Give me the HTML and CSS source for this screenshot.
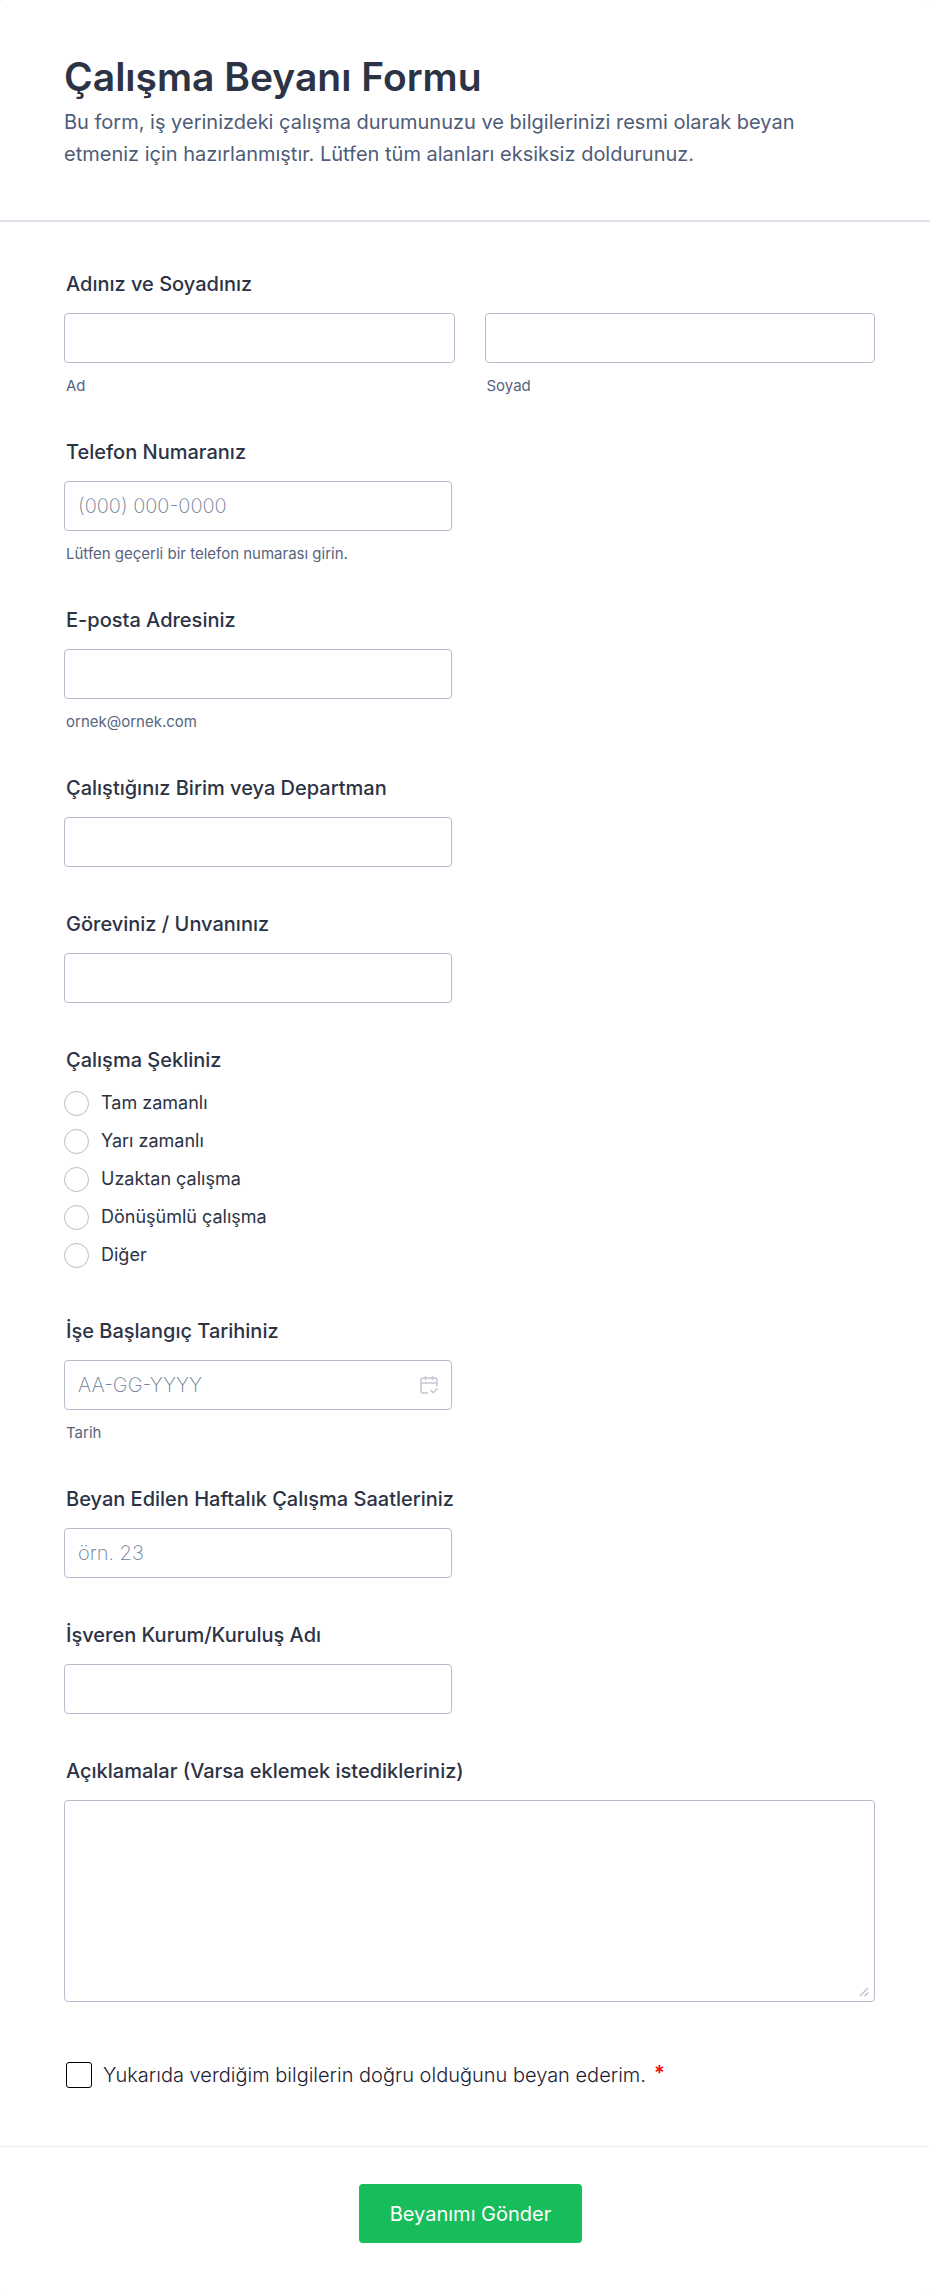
FILE: index.html
```html
<!DOCTYPE html>
<html lang="tr">

<head>
    <meta charset="UTF-8">
    <meta name="viewport" content="width=device-width, initial-scale=1.0">
    <title>Çalışma Beyanı Formu</title>
    <link rel="stylesheet" href="styles.css">
</head>

<body>
    <form class="form-card">
        <header class="form-header">
            <h1>Çalışma Beyanı Formu</h1>
            <p>Bu form, iş yerinizdeki çalışma durumunuzu ve bilgilerinizi resmi olarak beyan etmeniz için hazırlanmıştır. Lütfen tüm alanları eksiksiz doldurunuz.</p>
        </header>

        <div class="form-body">
            <fieldset class="field">
                <legend class="field-label">Adınız ve Soyadınız</legend>
                <div class="name-row">
                    <div>
                        <input type="text" id="firstName" class="text-input" />
                        <label for="firstName" class="sub-label">Ad</label>
                    </div>
                    <div>
                        <input type="text" id="lastName" class="text-input" />
                        <label for="lastName" class="sub-label">Soyad</label>
                    </div>
                </div>
            </fieldset>

            <div class="field">
                <label for="phone" class="field-label">Telefon Numaranız</label>
                <input type="tel" id="phone" class="text-input half" placeholder="(000) 000-0000" />
                <span class="sub-label">Lütfen geçerli bir telefon numarası girin.</span>
            </div>

            <div class="field">
                <label for="email" class="field-label">E-posta Adresiniz</label>
                <input type="email" id="email" class="text-input half" />
                <span class="sub-label">ornek@ornek.com</span>
            </div>

            <div class="field">
                <label for="department" class="field-label">Çalıştığınız Birim veya Departman</label>
                <input type="text" id="department" class="text-input half" />
            </div>

            <div class="field">
                <label for="jobTitle" class="field-label">Göreviniz / Unvanınız</label>
                <input type="text" id="jobTitle" class="text-input half" />
            </div>

            <fieldset class="field">
                <legend class="field-label">Çalışma Şekliniz</legend>
                <div class="radio-list">
                    <label class="radio-item"><input type="radio" name="workType" value="full" />Tam zamanlı</label>
                    <label class="radio-item"><input type="radio" name="workType" value="part" />Yarı zamanlı</label>
                    <label class="radio-item"><input type="radio" name="workType" value="remote" />Uzaktan çalışma</label>
                    <label class="radio-item"><input type="radio" name="workType" value="shift" />Dönüşümlü çalışma</label>
                    <label class="radio-item"><input type="radio" name="workType" value="other" />Diğer</label>
                </div>
            </fieldset>

            <div class="field">
                <label for="startDate" class="field-label">İşe Başlangıç Tarihiniz</label>
                <div class="date-box half">
                    <input type="text" id="startDate" class="text-input" placeholder="AA-GG-YYYY" />
                    <svg class="date-icon" viewBox="0 0 18 18" width="18" height="18" fill="none" stroke="currentColor" stroke-width="1.5" stroke-linecap="round" stroke-linejoin="round" aria-hidden="true">
                        <path d="M7.5 17H3a2 2 0 0 1-2-2V4a2 2 0 0 1 2-2h12a2 2 0 0 1 2 2v6" />
                        <path d="M1 7h16M5.5.8v3M12.5.8v3M11 14.5l2.2 2.2 3.8-3.9" />
                    </svg>
                </div>
                <span class="sub-label">Tarih</span>
            </div>

            <div class="field">
                <label for="hours" class="field-label">Beyan Edilen Haftalık Çalışma Saatleriniz</label>
                <input type="text" id="hours" class="text-input half" placeholder="örn. 23" />
            </div>

            <div class="field">
                <label for="employer" class="field-label">İşveren Kurum/Kuruluş Adı</label>
                <input type="text" id="employer" class="text-input half" />
            </div>

            <div class="field">
                <label for="notes" class="field-label">Açıklamalar (Varsa eklemek istedikleriniz)</label>
                <div class="notes-box">
                    <textarea id="notes" class="text-area"></textarea>
                    <svg class="resize-grip" viewBox="0 0 10 10" width="10" height="10" fill="none" stroke="currentColor" stroke-width="1.3" aria-hidden="true">
                        <path d="M1 9l8-8M5.5 9L9 5.5" />
                    </svg>
                </div>
            </div>

            <label class="terms"><input type="checkbox" id="terms" required /><span>Yukarıda verdiğim bilgilerin doğru olduğunu beyan ederim.</span><span class="required">*</span></label>
        </div>

        <footer class="form-footer">
            <button type="submit" class="submit-button">Beyanımı Gönder</button>
        </footer>
    </form>
</body>

</html>
```
FILE: styles.css
```css
* {
    box-sizing: border-box;
}

body {
    margin: 0;
    background-color: #f3f3fe;
    font-family: Inter, "Noto Sans", sans-serif;
    color: #2c3345;
}

.form-card {
    background-color: #fff;
    border-radius: 4px;
}

.form-header {
    padding: 53px 64px 50px;
    border-bottom: 2px solid #dfe0ea;
}

.form-header h1 {
    margin: 0;
    font-size: 39px;
    font-weight: 600;
    line-height: 48px;
}

.form-header p {
    max-width: 780px;
    margin: 5px 0 0;
    font-size: 20px;
    line-height: 32px;
    color: #4f5c78;
}

.form-body {
    padding: 49px 55px 58px 64px;
    border-bottom: 1px solid #eceef3;
}

.field {
    margin: 0 0 44px;
    padding: 0;
    border: none;
}

.field-label {
    display: block;
    margin-bottom: 16px;
    padding: 0 2px;
    font-size: 20px;
    font-weight: 500;
    line-height: 26px;
}

.name-row {
    display: grid;
    grid-template-columns: 1fr 1fr;
    gap: 30px;
}

.text-input,
.text-area {
    display: block;
    width: 100%;
    border: 1px solid #b8bdcd;
    border-radius: 4px;
    background-color: #fff;
    font-family: inherit;
    font-size: 20px;
    color: #2c3345;
}

.text-input {
    height: 50px;
    padding: 0 13px;
}

.half {
    width: 100%;
    max-width: 388px;
}

.text-input::placeholder {
    color: #6a7c94;
    font-weight: 200;
    opacity: 1;
}

.text-input:focus,
.text-area:focus {
    border-color: #2e69ff;
    outline: none;
}

.sub-label {
    display: block;
    margin-top: 14px;
    padding: 0 2px;
    font-size: 15px;
    line-height: 18px;
    color: #57647e;
}

.radio-list {
    display: flex;
    flex-direction: column;
    gap: 12px;
    padding: 1px 0 6px;
}

.radio-item {
    display: flex;
    align-items: center;
    gap: 12px;
    font-size: 18px;
    line-height: 26px;
}

.radio-item input {
    appearance: none;
    width: 25px;
    height: 25px;
    margin: 0;
    border: 1px solid #b8bdcd;
    border-radius: 50%;
    background-color: #fff;
}

.radio-item input:checked {
    border: 7px solid #2e69ff;
}

.date-box,
.notes-box {
    position: relative;
}

.date-icon {
    position: absolute;
    top: 16px;
    right: 14px;
    color: #c3c8d6;
}

.text-area {
    height: 202px;
    padding: 13px;
    resize: none;
}

.resize-grip {
    position: absolute;
    right: 6px;
    bottom: 5px;
    color: #b8bdcd;
}

.terms {
    display: flex;
    align-items: center;
    margin-top: 60px;
    padding-left: 2px;
    font-size: 20px;
    font-weight: 300;
    line-height: 26px;
    color: #1c2233;
}

.terms input {
    appearance: none;
    width: 26px;
    height: 26px;
    margin: 0 11px 0 0;
    border: 1px solid #000;
    border-radius: 3px;
}

.terms input:checked {
    background-color: #2e69ff;
}

.required {
    align-self: flex-start;
    margin-left: 8px;
    color: #ff0000;
    font-weight: 600;
    line-height: 22px;
}

.form-footer {
    display: flex;
    justify-content: center;
    padding: 37px 53px 50px 64px;
}

.submit-button {
    height: 59px;
    padding: 0 31px;
    border: none;
    border-radius: 4px;
    background-color: #18bd5b;
    color: #fff;
    font-family: inherit;
    font-size: 20px;
    cursor: pointer;
}

.submit-button:hover {
    background-color: #16aa52;
}
```
